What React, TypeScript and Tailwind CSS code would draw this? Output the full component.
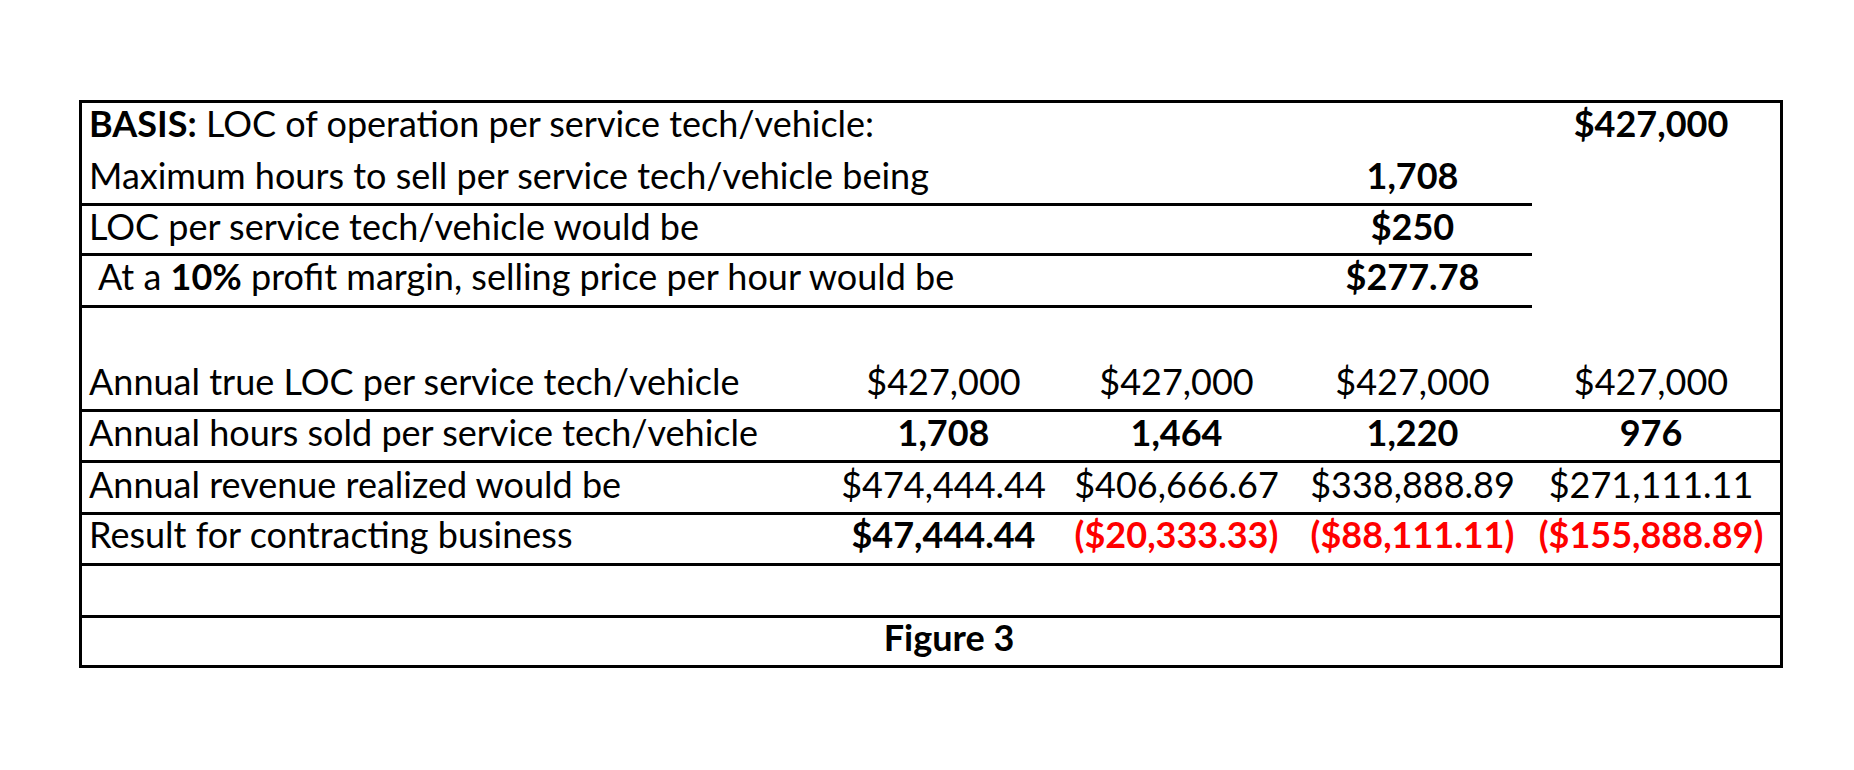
import React from "react";

type Border = "none" | "partial" | "full";

interface RowProps {
  h: string;
  pb: string;
  border: Border;
  label?: React.ReactNode;
  labelPad?: string;
  cells?: React.ReactNode[];
}

const widths = ["w-[745px]", "w-[233px]", "w-[233px]", "w-[239px]", "w-[248px]"];

function Row({ h, pb, border, label, labelPad = "pl-[7px]", cells = [] }: RowProps) {
  const bordered = (i: number) =>
    border === "full" || (border === "partial" && i < 4);
  return (
    <div className={`flex ${h}`}>
      {[0, 1, 2, 3, 4].map((i) => (
        <div
          key={i}
          className={`${widths[i]} shrink-0 flex items-end ${pb} ${
            bordered(i) ? "border-b-[3px] border-black" : ""
          } ${i === 0 ? `justify-start ${labelPad}` : "justify-center"} ${
            i === 4 ? "pr-[10px]" : ""
          }`}
        >
          <span className="leading-none whitespace-nowrap">
            {i === 0 ? label : cells[i - 1]}
          </span>
        </div>
      ))}
    </div>
  );
}

const Red = ({ children }: { children: React.ReactNode }) => (
  <span className="font-bold text-[#ff0000]">{children}</span>
);
const B = ({ children }: { children: React.ReactNode }) => (
  <span className="font-bold">{children}</span>
);

export default function App() {
  return (
    <div
      className="min-h-[770px] w-[1854px] bg-white pt-[100px] pl-[79px] text-black text-[36px]"
      style={{ fontFamily: "Lato, 'Open Sans', sans-serif" }}
    >
      <div className="w-[1704px] border-[3px] border-black">
        <Row
          h="h-[49px]"
          pb="pb-[11px]"
          border="none"
          label={
            <>
              <B>BASIS:</B> LOC of operation per service tech/vehicle:
            </>
          }
          cells={["", "", "", <B key="a">$427,000</B>]}
        />
        <Row
          h="h-[54px]"
          pb="pb-[10px]"
          border="partial"
          label="Maximum hours to sell per service tech/vehicle being"
          cells={["", "", <B key="a">1,708</B>, ""]}
        />
        <Row
          h="h-[50px]"
          pb="pb-[9px]"
          border="partial"
          label="LOC per service tech/vehicle would be"
          cells={["", "", <B key="a">$250</B>, ""]}
        />
        <Row
          h="h-[52px]"
          pb="pb-[11px]"
          border="partial"
          labelPad="pl-[16px]"
          label={
            <>
              At a <B>10%</B> profit margin, selling price per hour would be
            </>
          }
          cells={["", "", <B key="a">$277.78</B>, ""]}
        />
        <Row h="h-[49px]" pb="pb-[10px]" border="none" label="" />
        <Row
          h="h-[55px]"
          pb="pb-[10px]"
          border="full"
          label="Annual true LOC per service tech/vehicle"
          cells={["$427,000", "$427,000", "$427,000", "$427,000"]}
        />
        <Row
          h="h-[51px]"
          pb="pb-[10px]"
          border="full"
          label="Annual hours sold per service tech/vehicle"
          cells={[
            <B key="a">1,708</B>,
            <B key="b">1,464</B>,
            <B key="c">1,220</B>,
            <B key="d">976</B>,
          ]}
        />
        <Row
          h="h-[52px]"
          pb="pb-[10px]"
          border="full"
          label="Annual revenue realized would be"
          cells={["$474,444.44", "$406,666.67", "$338,888.89", "$271,111.11"]}
        />
        <Row
          h="h-[51px]"
          pb="pb-[11px]"
          border="full"
          label="Result for contracting business"
          cells={[
            <B key="a">$47,444.44</B>,
            <Red key="b">($20,333.33)</Red>,
            <Red key="c">($88,111.11)</Red>,
            <Red key="d">($155,888.89)</Red>,
          ]}
        />
        <div className="h-[52px] border-b-[3px] border-black" />
        <div className="h-[47px] flex items-end justify-center pb-[10px] pl-[36px]">
          <span className="leading-none font-bold whitespace-nowrap">Figure 3</span>
        </div>
      </div>
    </div>
  );
}
